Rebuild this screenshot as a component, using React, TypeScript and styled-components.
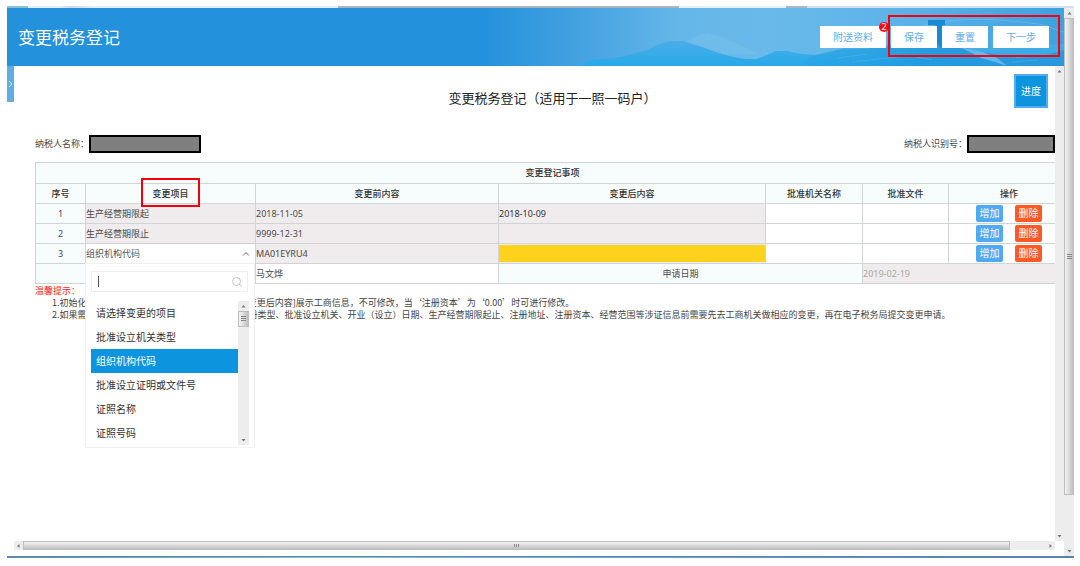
import React from "react";
import styled, { createGlobalStyle } from "styled-components";

const GlobalStyle = createGlobalStyle`
  *, *::before, *::after { box-sizing: border-box; }
  body {
    margin: 0;
    background: #fff;
    color: #4a4a4a;
    font-family: "Noto Sans", "Noto Sans CJK SC", sans-serif;
    font-size: 9px;
    line-height: 12px;
  }
  button, input { font: inherit; margin: 0; padding: 0; border: 0; border-radius: 0; }
  button { cursor: pointer; }
`;

const Shell = styled.div`
  display: flex;
  flex-direction: column;
  height: 100vh;
  min-height: 500px;
  padding: 6px 6px 8px 7px;
`;

const TopEdge = styled.div`
  flex: none;
  height: 2px;
  background: linear-gradient(
    90deg,
    #86c2d8 0 2%, #e2eef8 2% 5%, #cdd6ea 6%, #e4eef8 8% 31%,
    #a9b4bd 31% 63%, #e6f0fa 63% 73%, #a8b8c6 73% 75%, #cfe1f0 75% 100%
  );
`;

const BottomEdge = styled.div`
  flex: none;
  height: 2px;
  background: linear-gradient(90deg, #5f8eb0, #8fc0dc 30%, #6f9ec8 60%, #5c7ea6);
  border-top: 1px solid #5b86ad;
`;

const Frame = styled.div`
  display: flex;
  flex: 1;
  min-height: 0;
`;

const Page = styled.div`
  display: flex;
  flex: 1;
  flex-direction: column;
  min-width: 0;
  padding-bottom: 6px;
`;

const Header = styled.header`
  position: relative;
  display: flex;
  flex: none;
  align-items: center;
  justify-content: space-between;
  height: 58px;
  padding: 0 15px 0 11px;
  background: #2391db;
`;

const Scenery = styled.svg`
  position: absolute;
  inset: 0;
  width: 100%;
  height: 100%;
`;

const HeaderTitle = styled.h1`
  position: relative;
  margin: 0;
  padding-top: 2px;
  color: #fff;
  font-size: 17px;
  font-weight: 400;
  line-height: 24px;
`;

const Toolbar = styled.div`
  position: relative;
  display: flex;
  gap: 5px;
`;

const ToolButton = styled.button`
  position: relative;
  height: 22px;
  padding: 0 13px;
  background: #fff;
  color: #5caeee;
  font-size: 10px;
  line-height: 22px;
`;

const Badge = styled.span`
  position: absolute;
  top: -4px;
  right: -3px;
  width: 10px;
  height: 10px;
  border-radius: 50%;
  background: #f30f14;
  color: #fff;
  font-size: 9px;
  line-height: 10px;
  text-align: center;
`;

const MarkedGroup = styled.div`
  position: relative;
  display: flex;
  gap: 5px;

  &::after {
    content: "";
    position: absolute;
    inset: -11px -11px -9px -3px;
    border: 2px solid #f4000c;
    pointer-events: none;
  }
`;

const Body = styled.div`
  display: flex;
  flex: 1;
  min-height: 0;
`;

const SideHandle = styled.button`
  display: flex;
  flex: none;
  align-items: center;
  justify-content: center;
  width: 7px;
  height: 36px;
  background: #5fade2;
`;

const Content = styled.main`
  position: relative;
  flex: 1;
  min-width: 0;
  overflow: hidden;
`;

const Sheet = styled.div`
  width: calc(100% + 15px);
  padding-left: 21px;
`;

const SheetTitle = styled.h2`
  margin: 0;
  padding: 22px 0;
  color: #222;
  font-size: 13px;
  font-weight: 400;
  line-height: 20px;
  text-align: center;
`;

const ProgressButton = styled.button`
  position: absolute;
  top: 8px;
  right: 7px;
  width: 34px;
  height: 34px;
  border: 2px solid #55abf1;
  background: #0c94df;
  color: #fff;
  font-size: 10px;
`;

const TaxpayerRow = styled.div`
  display: flex;
  justify-content: space-between;
  height: 32px;
  padding: 4px 15px 0 0;
`;

const Field = styled.label`
  display: flex;
  height: 20px;
  align-items: center;
`;

const Masked = styled.input<{ $width: number }>`
  width: ${(p) => p.$width}px;
  height: 18px;
  border: 2px solid #000;
  background: #808080;
`;

const Grid = styled.table`
  width: 100%;
  table-layout: fixed;
  border-collapse: collapse;
  border: 1px solid #c6caca;

  th, td {
    height: 20px;
    padding: 0;
    border: 1px solid #d0d4d4;
    line-height: 12px;
    white-space: nowrap;
  }
  th {
    background: #f7fcfd;
    color: #333;
    font-weight: 500;
  }
  thead tr:first-child th { height: 21px; }
`;

type Tone = "label" | "locked" | "open";
const tones: Record<Tone, string> = { label: "#f7fcfd", locked: "#f0eced", open: "#fff" };

const Cell = styled.td<{ $tone: Tone; $center?: boolean }>`
  position: relative;
  background: ${(p) => tones[p.$tone]};
  text-align: ${(p) => (p.$center ? "center" : "left")};
`;

const CellInput = styled.input<{ $highlight?: boolean; $muted?: boolean }>`
  display: block;
  width: 100%;
  height: 17px;
  background: ${(p) => (p.$highlight ? "#ffd21e" : "transparent")};
  color: ${(p) => (p.$muted ? "#a9a9a9" : "#333")};
`;

const RowActions = styled.div`
  display: flex;
  justify-content: center;
  gap: 12px;
`;

const RowButton = styled.button<{ $danger?: boolean }>`
  width: 27px;
  height: 17px;
  border-radius: 2px;
  background: ${(p) => (p.$danger ? "#ff5a25" : "#4faaf3")};
  color: #fff;
  font-size: 10px;
  line-height: 17px;
`;

const ComboButton = styled.button`
  display: flex;
  align-items: center;
  justify-content: space-between;
  width: 100%;
  height: 18px;
  padding-right: 5px;
  background: #fff;
  color: #555;
`;

const Menu = styled.div`
  position: absolute;
  z-index: 2;
  top: 100%;
  left: -1px;
  right: 0;
  padding: 7px 5px 2px 5px;
  border: 1px solid #f0f0f0;
  background: #fff;
`;

const SearchBox = styled.label`
  display: flex;
  align-items: center;
  height: 21px;
  margin-right: 1px;
  padding: 0 4px 0 6px;
  border: 1px solid #eee;
`;

const Caret = styled.span`
  width: 1px;
  height: 11px;
  background: #555;
`;

const SearchInput = styled.input`
  flex: 1;
  min-width: 0;
  outline: 0;
  background: transparent;
`;

const MenuScroll = styled.div`
  display: flex;
  margin-top: 9px;
`;

const Options = styled.ul`
  flex: 1;
  margin: 0;
  padding: 0;
  list-style: none;
`;

const Option = styled.li<{ $selected: boolean }>`
  height: 24px;
  padding-left: 5px;
  background: ${(p) => (p.$selected ? "#0c94df" : "#fff")};
  color: ${(p) => (p.$selected ? "#fff" : "#333")};
  font-size: 10px;
  line-height: 24px;
`;

const Tips = styled.section`
  color: #444;
  font-family: "Noto Sans CJK SC", sans-serif;
  white-space: nowrap;

  h3 {
    margin: 0;
    color: #fb1c20;
    font-size: 9px;
    font-weight: 400;
    line-height: 13px;
  }
  p { margin: 0; padding-left: 17px; }
`;

const Track = styled.div<{ $dir: "v" | "h"; $size: number }>`
  display: flex;
  flex: none;
  flex-direction: ${(p) => (p.$dir === "v" ? "column" : "row")};
  ${(p) => (p.$dir === "v" ? "width" : "height")}: ${(p) => p.$size}px;
  background: #ededee;
`;

const Arrow = styled.svg`
  flex: none;
  align-self: center;
  width: 9px;
  height: 10px;
`;

const Thumb = styled.div<{ $dir: "v" | "h"; $grow: number }>`
  display: flex;
  flex: ${(p) => p.$grow} 1 0;
  align-items: center;
  justify-content: center;
  border: 1px solid #bdbdc0;
  background: linear-gradient(
    ${(p) => (p.$dir === "v" ? "90deg" : "180deg")}, #f3f3f4, #dededf 45%, #bfbfc1
  );
`;

const Rest = styled.div<{ $grow: number }>`
  flex: ${(p) => p.$grow} 1 0;
`;

const HorizontalBar = styled.div`
  flex: none;
  display: flex;
  flex-direction: column;
  padding: 0 9px 0 7px;
`;

const MarkedHeading = styled.span`
  position: relative;
  z-index: 1;

  &::after {
    content: "";
    position: absolute;
    inset: -9px -11px -7px;
    border: 2px solid #f4000c;
  }
`;

const arrowPaths = {
  up: "M2.5 6.5 4.5 4 6.5 6.5z",
  down: "M2.5 4 4.5 6.5 6.5 4z",
  left: "M5.5 3 3 5 5.5 7z",
  right: "M3.5 3 6 5 3.5 7z",
};

function ScrollArrow({ to }: { to: keyof typeof arrowPaths }) {
  return (
    <Arrow viewBox="0 0 9 10" aria-hidden="true">
      <path d={arrowPaths[to]} fill="#777" />
    </Arrow>
  );
}

function Grip({ vertical }: { vertical?: boolean }) {
  return (
    <svg width="5" height="5" viewBox="0 0 5 5" aria-hidden="true">
      <path
        d={vertical ? "M.5 1v3M2.5 1v3M4.5 1v3" : "M0 .5h5M0 2.5h5M0 4.5h5"}
        stroke="#888"
        strokeWidth="1"
      />
    </svg>
  );
}

function HeaderScenery() {
  return (
    <Scenery viewBox="0 0 1057 58" preserveAspectRatio="none" aria-hidden="true">
      <defs>
        <linearGradient id="sky" x1="0" x2="1" y1="0" y2="0">
          <stop offset="0.45" stopColor="#2391db" />
          <stop offset="0.54" stopColor="#44a2e1" />
          <stop offset="0.64" stopColor="#66b7e9" />
          <stop offset="0.72" stopColor="#69baea" />
          <stop offset="0.84" stopColor="#5db3e8" />
          <stop offset="1" stopColor="#3ea2e0" />
        </linearGradient>
        <linearGradient id="hill" x1="0" x2="0" y1="0" y2="1">
          <stop offset="0" stopColor="#4aaee8" />
          <stop offset="1" stopColor="#27a9e9" />
        </linearGradient>
        <linearGradient id="sea" x1="0" x2="1" y1="0" y2="0">
          <stop offset="0" stopColor="#1f9fe2" stopOpacity="0.2" />
          <stop offset="0.5" stopColor="#1c94dc" stopOpacity="0.7" />
          <stop offset="1" stopColor="#2a92d8" stopOpacity="0.8" />
        </linearGradient>
      </defs>
      <rect width="1057" height="58" fill="url(#sky)" />
      <path d="M676 36 690 28 700 25 712 28 726 34 750 46H670z" fill="#7cc3ee" opacity="0.4" />
      <path
        d="M572 58 584 52 606 50 618 48 640 42 652 36 662 33 676 33 692 38 712 45 726 49 738 51 750 51 760 47 768 43 780 43 794 46 808 47 826 43 846 38 870 37 900 40 940 40 990 42 1057 36V58z"
        fill="url(#hill)"
      />
      <path
        d="M790 58 806 48 830 42 860 41 890 36 915 34 940 38 975 44 1010 50 1035 48 1057 42V58z"
        fill="url(#sea)"
      />
      <path d="M860 30C900 24 930 8 990 12S1040 20 1057 24" stroke="#7fc4ee" opacity="0.5" fill="none" />
      <path d="M921 12H938V17H935V40L928 34V17H921z" fill="#168bd2" />
      <path d="M955 40 976 44 990 50 1000 58 988 54 974 50z" fill="#a3d3f2" opacity="0.5" />
      <path d="M830 50 860 46M845 54 890 49M900 47 925 52M1005 54 1030 52" stroke="#5db6ea" opacity="0.5" />
    </Scenery>
  );
}

const options = [
  "请选择变更的项目",
  "批准设立机关类型",
  "组织机构代码",
  "批准设立证明或文件号",
  "证照名称",
  "证照号码",
];

const rows = [
  { item: "生产经营期限起", before: "2018-11-05", after: "2018-10-09" },
  { item: "生产经营期限止", before: "9999-12-31", after: "" },
  { item: "组织机构代码", before: "MA01EYRU4", after: "", open: true },
];

const columns = [50, 170, 243, 267, 97, 86, 121];
const columnTotal = columns.reduce((a, b) => a + b, 0);

function ItemMenu({ value }: { value: string }) {
  return (
    <Menu>
      <SearchBox>
        <Caret />
        <SearchInput type="text" aria-label="搜索变更项目" />
        <svg width="12" height="12" viewBox="0 0 12 12" fill="none" stroke="#c4c4c4" aria-hidden="true">
          <circle cx="5.5" cy="5.5" r="4" />
          <path d="m8.5 8.5 2.5 2" />
        </svg>
      </SearchBox>
      <MenuScroll>
        <Options role="listbox" aria-label="变更项目">
          {options.map((o) => (
            <Option key={o} role="option" aria-selected={o === value} $selected={o === value}>
              {o}
            </Option>
          ))}
        </Options>
        <Track $dir="v" $size={11}>
          <ScrollArrow to="up" />
          <Thumb $dir="v" $grow={14}>
            <Grip />
          </Thumb>
          <Rest $grow={110} />
          <ScrollArrow to="down" />
        </Track>
      </MenuScroll>
    </Menu>
  );
}

function ChangeTable() {
  return (
    <Grid>
      <colgroup>
        {columns.map((w, i) => (
          <col key={i} style={{ width: `${(w / columnTotal) * 100}%` }} />
        ))}
      </colgroup>
      <thead>
        <tr>
          <th colSpan={7}>变更登记事项</th>
        </tr>
        <tr>
          {["序号", "变更项目", "变更前内容", "变更后内容", "批准机关名称", "批准文件", "操作"].map((h) => (
            <th key={h} scope="col">
              {h === "变更项目" ? <MarkedHeading>{h}</MarkedHeading> : h}
            </th>
          ))}
        </tr>
      </thead>
      <tbody>
        {rows.map((r, i) => (
          <tr key={r.item}>
            <Cell $tone="label" $center>{i + 1}</Cell>
            <Cell $tone={r.open ? "open" : "locked"}>
              {r.open ? (
                <>
                  <ComboButton type="button" aria-haspopup="listbox" aria-expanded="true">
                    {r.item}
                    <svg width="8" height="6" viewBox="0 0 8 6" fill="none" stroke="#666" aria-hidden="true">
                      <path d="m1 4.5 3-3 3 3" />
                    </svg>
                  </ComboButton>
                  <ItemMenu value={r.item} />
                </>
              ) : (
                r.item
              )}
            </Cell>
            <Cell $tone="locked">{r.before}</Cell>
            <Cell $tone="locked">
              <CellInput aria-label="变更后内容" defaultValue={r.after} $highlight={r.open} />
            </Cell>
            <Cell $tone="open">
              <CellInput aria-label="批准机关名称" />
            </Cell>
            <Cell $tone="open">
              <CellInput aria-label="批准文件" />
            </Cell>
            <Cell $tone="open">
              <RowActions>
                <RowButton type="button">增加</RowButton>
                <RowButton type="button" $danger>删除</RowButton>
              </RowActions>
            </Cell>
          </tr>
        ))}
        <tr>
          <Cell $tone="label" colSpan={2} />
          <Cell $tone="open">马文烨</Cell>
          <Cell $tone="label" $center colSpan={2}>申请日期</Cell>
          <Cell $tone="locked" colSpan={2}>
            <CellInput aria-label="申请日期" defaultValue="2019-02-19" readOnly $muted />
          </Cell>
        </tr>
      </tbody>
    </Grid>
  );
}

export default function App() {
  return (
    <>
      <GlobalStyle />
      <Shell lang="zh-CN">
        <TopEdge />
        <Frame>
          <Page>
            <Header>
              <HeaderScenery />
              <HeaderTitle>变更税务登记</HeaderTitle>
              <Toolbar>
                <ToolButton type="button">
                  附送资料<Badge>2</Badge>
                </ToolButton>
                <MarkedGroup>
                  <ToolButton type="button">保存</ToolButton>
                  <ToolButton type="button">重置</ToolButton>
                  <ToolButton type="button">下一步</ToolButton>
                </MarkedGroup>
              </Toolbar>
            </Header>
            <Body>
              <SideHandle type="button" aria-label="展开侧栏">
                <svg width="5" height="8" viewBox="0 0 5 8" fill="none" stroke="#d9ecf9" aria-hidden="true">
                  <path d="m1 1 3 3-3 3" />
                </svg>
              </SideHandle>
              <Content>
                <Sheet>
                  <SheetTitle>变更税务登记（适用于一照一码户）</SheetTitle>
                  <TaxpayerRow>
                    <Field>
                      纳税人名称：
                      <Masked $width={112} readOnly />
                    </Field>
                    <Field>
                      纳税人识别号：
                      <Masked $width={88} readOnly />
                    </Field>
                  </TaxpayerRow>
                  <ChangeTable />
                  <Tips>
                    <h3>温馨提示：</h3>
                    <p>1.初始化时，表格中 [变更项目]和[变更前内容]、[变更后内容]展示工商信息，不可修改，当‘注册资本’为‘0.00’时可进行修改。</p>
                    <p>2.如果需要变更纳税人名称、法定代表人、登记注册类型、批准设立机关、开业（设立）日期、生产经营期限起止、注册地址、注册资本、经营范围等涉证信息前需要先去工商机关做相应的变更，再在电子税务局提交变更申请。</p>
                  </Tips>
                </Sheet>
                <ProgressButton type="button">进度</ProgressButton>
              </Content>
              <Track $dir="v" $size={9}>
                <ScrollArrow to="up" />
                <Rest $grow={1} />
                <ScrollArrow to="down" />
              </Track>
            </Body>
            <HorizontalBar>
              <Track $dir="h" $size={9}>
                <ScrollArrow to="left" />
                <Thumb $dir="h" $grow={986}>
                  <Grip vertical />
                </Thumb>
                <Rest $grow={36} />
                <ScrollArrow to="right" />
              </Track>
            </HorizontalBar>
          </Page>
          <Track $dir="v" $size={10}>
            <ScrollArrow to="up" />
            <Thumb $dir="v" $grow={477}>
              <Grip />
            </Thumb>
            <Rest $grow={51} />
            <ScrollArrow to="down" />
          </Track>
        </Frame>
        <BottomEdge />
      </Shell>
    </>
  );
}
